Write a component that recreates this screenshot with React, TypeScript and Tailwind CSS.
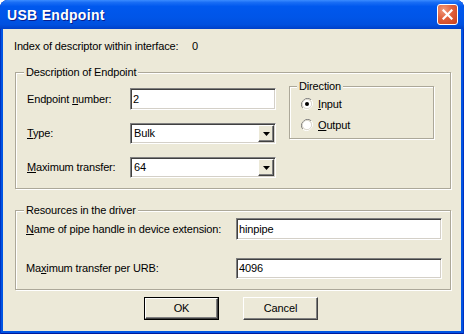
import React from "react";

const sunken =
  "border border-t-[#808080] border-l-[#808080] border-b-white border-r-white shadow-[inset_1px_1px_0_#404040,inset_-1px_-1px_0_#d4d0c8]";

const raised =
  "border border-t-white border-l-white border-b-[#404040] border-r-[#404040] shadow-[inset_-1px_-1px_0_#808080]";

const etched =
  "border border-[#aca899] shadow-[inset_1px_1px_0_#fff,1px_1px_0_#fff]";

const EditBox: React.FC<{ value: string; width: string; height?: string }> = ({
  value,
  width,
  height = "h-[22px]",
}) => (
  <div className={`${sunken} ${width} ${height} bg-white flex items-center pl-[2px]`}>
    <span className="leading-[13px]">{value}</span>
  </div>
);

const Combo: React.FC<{ value: string }> = ({ value }) => (
  <div className={`${sunken} w-[146px] h-[21px] bg-white flex items-center justify-between pl-[3px] pr-[1px]`}>
    <span className="leading-[13px]">{value}</span>
    <div className={`${raised} w-[16px] h-[17px] bg-[#ece9d8] flex items-center justify-center`}>
      <svg width="7" height="4" viewBox="0 0 7 4">
        <path d="M0 0h7L3.5 4z" fill="#000" />
      </svg>
    </div>
  </div>
);

const Radio: React.FC<{ checked?: boolean }> = ({ checked }) => (
  <svg width="12" height="12" viewBox="0 0 12 12">
    <path d="M10.2 1.8A6 6 0 0 0 1.8 10.2" fill="none" stroke="#808080" strokeWidth="1" />
    <path d="M1.8 10.2A6 6 0 0 0 10.2 1.8" fill="none" stroke="#fff" strokeWidth="1" />
    <circle cx="6" cy="6" r="4.6" fill="#fff" stroke="#d4d0c8" strokeWidth="0.8" />
    {checked && <circle cx="6" cy="6" r="2" fill="#000" />}
  </svg>
);

const GroupLabel: React.FC<{ text: string; left: string }> = ({ text, left }) => (
  <span className={`absolute -top-[7px] ${left} px-[2px] bg-[#ece9d8] leading-[13px]`}>
    {text}
  </span>
);

export default function App() {
  return (
    <div className="w-[464px] h-[334px] rounded-t-[8px] overflow-hidden bg-[#0054e3] shadow-[inset_1px_0_0_#0032c0,inset_-1px_0_0_#0032c0,inset_0_-1px_0_#001a9c] flex flex-col font-['Liberation_Sans',Arial,sans-serif] text-[11px] tracking-[-0.15px] text-black">
      {/* title bar */}
      <div className="h-[29px] shrink-0 flex items-center justify-between pl-[7px] pr-[6px] bg-[linear-gradient(to_bottom,#3b8cff_0%,#1a6ef5_8%,#0058ee_22%,#0055e8_60%,#0050df_85%,#0040c8_100%)]">
        <span className="text-white font-bold text-[14px] tracking-[0.3px] leading-[16px] [text-shadow:1px_1px_0_#0a1e8c]">
          USB Endpoint
        </span>
        <div className="w-[21px] h-[21px] rounded-[3px] border border-white flex items-center justify-center bg-[radial-gradient(circle_at_30%_25%,#f09a7c_0%,#e0603c_45%,#c8401c_100%)]">
          <svg width="11" height="11" viewBox="0 0 11 11">
            <path d="M1.5 1.5l8 8M9.5 1.5l-8 8" stroke="#fff" strokeWidth="2.2" strokeLinecap="square" />
          </svg>
        </div>
      </div>

      {/* body */}
      <div className="flex-1 mx-[3px] mb-[3px] bg-[#ece9d8] flex flex-col">
        <div className="flex mt-[11px] ml-[11px] leading-[13px]">
          <span className="w-[178px]">Index of descriptor within interface:</span>
          <span>0</span>
        </div>

        {/* Description of Endpoint */}
        <div className={`relative ${etched} ml-[12px] mt-[19px] w-[436px] h-[117px] flex items-start pl-[11px] pt-[13px]`}>
          <GroupLabel text="Description of Endpoint" left="left-[8px]" />
          <div className="flex flex-col gap-[13px] mt-[2px]">
            <div className="flex items-center">
              <span className="w-[103px] leading-[13px]">
                Endpoint <span className="underline">n</span>umber:
              </span>
              <EditBox value="2" width="w-[146px]" />
            </div>
            <div className="flex items-center">
              <span className="w-[103px] leading-[13px]">
                <span className="underline">T</span>ype:
              </span>
              <Combo value="Bulk" />
            </div>
            <div className="flex items-center">
              <span className="w-[103px] leading-[13px]">
                <span className="underline">M</span>aximum transfer:
              </span>
              <Combo value="64" />
            </div>
          </div>

          <div className={`relative ${etched} ml-[13px] w-[145px] h-[53px] flex flex-col gap-[7px] pt-[10px] pl-[11px]`}>
            <GroupLabel text="Direction" left="left-[7px]" />
            <div className="flex items-center h-[14px]">
              <Radio checked />
              <span className="ml-[5px] leading-[13px]">
                <span className="underline">I</span>nput
              </span>
            </div>
            <div className="flex items-center h-[14px]">
              <Radio />
              <span className="ml-[5px] leading-[13px]">
                <span className="underline">O</span>utput
              </span>
            </div>
          </div>
        </div>

        {/* Resources in the driver */}
        <div className={`relative ${etched} ml-[12px] mt-[21px] w-[436px] h-[80px] flex flex-col gap-[18px] pl-[10px] pt-[7px]`}>
          <GroupLabel text="Resources in the driver" left="left-[8px]" />
          <div className="flex items-center">
            <span className="w-[210px] leading-[13px]">
              <span className="underline">N</span>ame of pipe handle in device extension:
            </span>
            <EditBox value="hinpipe" width="w-[206px]" />
          </div>
          <div className="flex items-center">
            <span className="w-[210px] leading-[13px]">
              Ma<span className="underline">x</span>imum transfer per URB:
            </span>
            <EditBox value="4096" width="w-[206px]" height="h-[21px]" />
          </div>
        </div>

        {/* buttons */}
        <div className="flex gap-[24px] mt-[7px] pl-[141px]">
          <div className="w-[75px] h-[23px] border border-black">
            <div className={`${raised} w-full h-full bg-[#ece9d8] flex items-center justify-center leading-[13px]`}>
              OK
            </div>
          </div>
          <div className={`${raised} w-[75px] h-[23px] bg-[#ece9d8] flex items-center justify-center leading-[13px]`}>
            Cancel
          </div>
        </div>
      </div>
    </div>
  );
}
